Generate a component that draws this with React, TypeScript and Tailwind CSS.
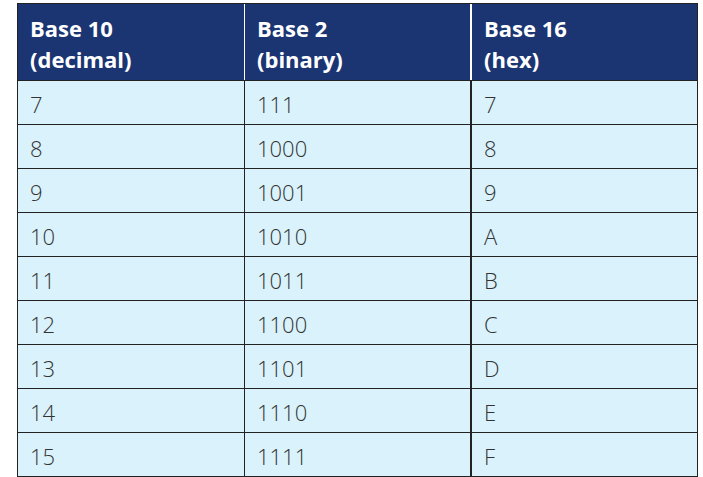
const rows: [string, string, string][] = [
  ["7", "111", "7"],
  ["8", "1000", "8"],
  ["9", "1001", "9"],
  ["10", "1010", "A"],
  ["11", "1011", "B"],
  ["12", "1100", "C"],
  ["13", "1101", "D"],
  ["14", "1110", "E"],
  ["15", "1111", "F"],
];

const headers: [string, string][] = [
  ["Base 10", "(decimal)"],
  ["Base 2", "(binary)"],
  ["Base 16", "(hex)"],
];

export default function App() {
  return (
    <div className="w-[703px] h-[477px] bg-white pl-[17px] pt-[3px] font-['Open_Sans',sans-serif]">
      <div className="w-[681px] border border-[#222] bg-[#d9f2fb]">
        <div className="grid grid-cols-[227px_227px_1fr] h-[76px] bg-[#1b3573]">
          {headers.map(([a, b], i) => (
            <div
              key={a}
              className={`pl-[12px] pt-[9px] text-white font-bold text-[22px] leading-[31px] ${
                i === 0 ? "border-r border-white" : i === 1 ? "border-r-2 border-white" : ""
              }`}
            >
              <div>{a}</div>
              <div>{b}</div>
            </div>
          ))}
        </div>
        {rows.map((r) => (
          <div key={r[0]} className="grid grid-cols-[227px_227px_1fr] h-[44px] border-t border-[#222]">
            {r.map((v, i) => (
              <div
                key={i}
                className={`pl-[12px] pt-[3px] text-[22px] leading-[41px] font-light text-[#333] ${
                  i === 0 ? "border-r border-[#222]" : i === 1 ? "border-r-2 border-[#222]" : ""
                }`}
              >
                {v}
              </div>
            ))}
          </div>
        ))}
      </div>
    </div>
  );
}
